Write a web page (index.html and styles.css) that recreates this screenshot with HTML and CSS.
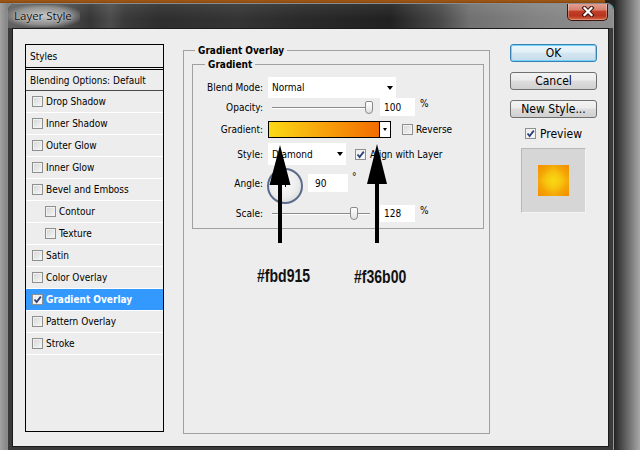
FILE: index.html
```html
<!DOCTYPE html>
<html>
<head>
<meta charset="utf-8">
<title>Layer Style</title>
<link rel="stylesheet" href="styles.css">
</head>
<body>
<div class="window">
  <div class="titlebar">
    <span class="title">Layer Style</span>
    <div class="close">
      <svg width="14" height="11" viewBox="0 0 14 11"><path d="M3.5 2 L10.5 9 M10.5 2 L3.5 9" stroke="#3a1610" stroke-width="4.2" stroke-linecap="square" fill="none"/><path d="M3.5 2 L10.5 9 M10.5 2 L3.5 9" stroke="#fff" stroke-width="2.2" stroke-linecap="square" fill="none"/></svg>
    </div>
  </div>
  <div class="content">
    <ul class="styles-list">
      <li class="head">Styles</li>
      <li class="blending">Blending Options: Default</li>
      <li class="item"><span class="cb"></span>Drop Shadow</li>
      <li class="item"><span class="cb"></span>Inner Shadow</li>
      <li class="item"><span class="cb"></span>Outer Glow</li>
      <li class="item"><span class="cb"></span>Inner Glow</li>
      <li class="item"><span class="cb"></span>Bevel and Emboss</li>
      <li class="item sub"><span class="cb"></span>Contour</li>
      <li class="item sub"><span class="cb"></span>Texture</li>
      <li class="item"><span class="cb"></span>Satin</li>
      <li class="item"><span class="cb"></span>Color Overlay</li>
      <li class="item active"><span class="cb checked"><svg width="9" height="9" viewBox="0 0 9 9"><path d="M1.5 4.5 L3.6 7 L7.8 1.6" stroke="#2b3f7a" stroke-width="1.8" fill="none"/></svg></span>Gradient Overlay</li>
      <li class="item"><span class="cb"></span>Pattern Overlay</li>
      <li class="item"><span class="cb"></span>Stroke</li>
    </ul>

    <div class="panel">
      <fieldset class="group outer">
        <legend>Gradient Overlay</legend>
        <fieldset class="group inner">
          <legend>Gradient</legend>
          <div class="row r-blend">
            <span class="lbl">Blend Mode:</span>
            <div class="select sel-blend"><span>Normal</span><i class="caret"></i></div>
          </div>
          <div class="row r-opacity">
            <span class="lbl">Opacity:</span>
            <div class="slider"><span class="thumb" style="left:93px"></span></div>
            <div class="num">100</div>
            <span class="unit">%</span>
          </div>
          <div class="row r-gradient">
            <span class="lbl">Gradient:</span>
            <div class="gradbar"><span class="gradfill"></span><span class="gradbtn"><i class="caret small"></i></span></div>
            <span class="cb"></span>
            <span class="cblabel">Reverse</span>
          </div>
          <div class="row r-style">
            <span class="lbl">Style:</span>
            <div class="select sel-style"><span>Diamond</span><i class="caret"></i></div>
            <span class="cb checked"><svg width="9" height="9" viewBox="0 0 9 9"><path d="M1.5 4.5 L3.6 7 L7.8 1.6" stroke="#2b3f7a" stroke-width="1.8" fill="none"/></svg></span>
            <span class="cblabel">Align with Layer</span>
          </div>
          <div class="row r-angle">
            <span class="lbl">Angle:</span>
            <div class="dial"></div>
            <div class="num num-angle">90</div>
            <span class="unit">°</span>
          </div>
          <div class="row r-scale">
            <span class="lbl">Scale:</span>
            <div class="slider"><span class="thumb" style="left:78px"></span></div>
            <div class="num">128</div>
            <span class="unit">%</span>
          </div>
        </fieldset>
      </fieldset>
    </div>

    <div class="actions">
      <button class="btn default">OK</button>
      <button class="btn">Cancel</button>
      <button class="btn">New Style...</button>
      <div class="preview-check"><span class="cb checked"><svg width="9" height="9" viewBox="0 0 9 9"><path d="M1.5 4.5 L3.6 7 L7.8 1.6" stroke="#2b3f7a" stroke-width="1.8" fill="none"/></svg></span><span>Preview</span></div>
      <div class="preview"><div class="swatch"></div></div>
    </div>

    <svg class="arrow a1" width="22" height="98" viewBox="0 0 22 98"><polygon points="11,0 21.5,40 13,40 13,98 9,98 9,40 0.5,40" fill="#000"/></svg>
    <svg class="arrow a2" width="22" height="99" viewBox="0 0 22 99"><polygon points="11,0 21,40 13,40 13,99 9,99 9,40 1,40" fill="#000"/></svg>
    <span class="note n1">#fbd915</span>
    <span class="note n2">#f36b00</span>
  </div>
</div>
</body>
</html>
```

FILE: styles.css
```css
* { box-sizing: border-box; }

html, body {
  margin: 0;
  width: 640px;
  height: 450px;
  overflow: hidden;
}

body {
  background:
    linear-gradient(#a05a18, #87470e) 0 0 / 605px 3px no-repeat,
    linear-gradient(90deg, #a2a2a2 0px, #858585 7px, #222 614px, #333 617px, #a8a8a8 640px);
  font-family: "DejaVu Sans Condensed", "DejaVu Sans", sans-serif;
  font-size: 10px;
  color: #000;
}

.window {
  width: 607px;
  height: 447px;
  margin: 3px 0 0 7px;
  border: 1px solid #8c8c8c;
  border-bottom: 0;
  border-right-color: #52b0cf;
  border-radius: 7px 7px 0 0;
  background: #3a3a3a;
  overflow: hidden;
}

.titlebar {
  height: 24px;
  display: flex;
  justify-content: space-between;
  align-items: flex-start;
  background:
    linear-gradient(rgba(255,255,255,0.08), rgba(255,255,255,0) 60%),
    linear-gradient(90deg, #626262 0px, #525252 52px, #363636 82px, #4c4c4c 102px, #3a3a3a 117px, #2e2e2e 152px, #343434 230px, #2a2a2a 292px, #212121 382px, #4a4a4a 432px, #717171 462px, #848484 532px, #8e8e8e 605px);
}

.title {
  margin: 1px 0 0 0;
  padding: 4px 8px 4px 6px;
  font-family: "Open Sans", "Liberation Sans", sans-serif;
  font-size: 11.5px;
  line-height: 14px;
  color: #111;
  background: radial-gradient(ellipse at 50% 50%, rgba(235,235,235,0.75) 0%, rgba(210,210,210,0.45) 55%, rgba(200,200,200,0) 80%);
  text-shadow: 0 0 2px rgba(255,255,255,0.7);
}

.close {
  width: 41px;
  height: 18px;
  margin: -1px 5px 0 0;
  border: 1px solid #3b1510;
  border-top: 0;
  border-radius: 0 0 5px 5px;
  background: linear-gradient(#e6a597 0%, #d8806d 40%, #c33e27 50%, #b8341f 75%, #d8643f 100%);
  box-shadow: inset 0 0 0 1px rgba(255,255,255,0.3);
  display: flex;
  align-items: center;
  justify-content: center;
}

.content {
  margin: 0 4px;
  height: 419px;
  border: 1px solid #1b1b1b;
  background: #ededed;
  display: flex;
  align-items: flex-start;
  padding: 15px 0 0 12px;
  position: relative;
}

/* left list */
.styles-list {
  list-style: none;
  margin: 0;
  padding: 0;
  width: 139px;
  height: 388px;
  border: 1px solid #000;
  flex: none;
}

.styles-list li {
  display: flex;
  align-items: center;
  white-space: nowrap;
}

.styles-list .head {
  height: 25px;
  border-bottom: 3px double #000;
  padding-left: 4px;
}

.styles-list .blending {
  height: 21px;
  border-bottom: 1px solid #4a4a4a;
  padding-left: 4px;
}

.styles-list .item {
  height: 22px;
  border-bottom: 1px solid #fff;
  padding-left: 6px;
}

.styles-list .item.sub { padding-left: 19px; }

.styles-list .item .cb { margin-right: 3px; }

.styles-list .item.active {
  background: #3399ff;
  color: #fff;
  font-weight: bold;
}

/* checkbox */
.cb {
  width: 11px;
  height: 11px;
  flex: none;
  border: 1px solid #8e8f8f;
  background: linear-gradient(135deg, #d4d4d4, #f8f8f8);
  box-shadow: inset 0 0 0 1px #f2f2f2;
  display: flex;
  align-items: center;
  justify-content: center;
}

.cb.checked { background: linear-gradient(135deg, #e8e8e8, #ffffff); }

/* middle panel */
.panel {
  margin-left: 19px;
  width: 307px;
  flex: none;
}

.group {
  margin: 0;
  border: 1px solid #a0a0a0;
  min-width: 0;
}

.group legend {
  font-weight: bold;
  padding: 0 3px;
  line-height: 13px;
}

.outer {
  height: 390px;
  padding: 1px 5px 0 8px;
}

.outer > legend { margin-left: 3px; }

.inner {
  padding: 6px 0 6px 8px;
}

.inner > legend { margin-left: 4px; }

.row {
  display: flex;
  align-items: center;
  white-space: nowrap;
}

.lbl {
  width: 62px;
  margin-right: 5px;
  text-align: right;
  flex: none;
}

.r-blend { height: 21px; }

.select {
  height: 100%;
  background: #fff;
  display: flex;
  align-items: center;
  justify-content: space-between;
  padding: 0 3px 0 4px;
}

.sel-blend { width: 128px; }
.sel-style { width: 78px; }

.caret {
  width: 0;
  height: 0;
  border-left: 3.5px solid transparent;
  border-right: 3.5px solid transparent;
  border-top: 4px solid #000;
}

.caret.small {
  border-left-width: 2.5px;
  border-right-width: 2.5px;
  border-top-width: 3px;
}

.r-opacity { height: 18px; }

.slider {
  position: relative;
  width: 104px;
  height: 13px;
  margin: 0 4px;
  flex: none;
}

.slider::before {
  content: "";
  position: absolute;
  left: 0;
  top: 6px;
  width: 98px;
  height: 1px;
  background: #8a8a8a;
  box-shadow: 0 1px 0 #fff;
}

.thumb {
  position: absolute;
  top: 0;
  width: 8px;
  height: 13px;
  border: 1px solid #8a8a8a;
  border-radius: 2px 2px 4px 4px;
  background: linear-gradient(#ffffff, #e2e2e2);
}

.num {
  width: 35px;
  height: 100%;
  background: #fff;
  padding-left: 4px;
  display: flex;
  align-items: center;
  flex: none;
}

.unit {
  margin-left: 5px;
  align-self: flex-start;
  line-height: 12px;
}

.r-gradient { height: 17px; margin-top: 5px; }

.gradbar {
  width: 123px;
  height: 17px;
  border: 1px solid #000;
  display: flex;
  flex: none;
}

.gradfill {
  flex: 1;
  background: linear-gradient(90deg, #fbd915, #f36b00);
}

.gradbtn {
  width: 11px;
  border-left: 1px solid #000;
  background: #fff;
  display: flex;
  align-items: center;
  justify-content: center;
}

.r-gradient .cb { margin-left: 11px; }
.cblabel { margin-left: 3px; }

.r-style { height: 22px; margin-top: 5px; }
.r-style .cb { margin-left: 9px; }
.r-style .cblabel { margin-left: 4px; }

.r-angle {
  height: 36px;
  margin-top: 3px;
  align-items: flex-start;
}

.r-angle .lbl { margin-top: 10px; }

.dial {
  width: 36px;
  height: 36px;
  margin-left: -1px;
  border-radius: 50%;
  border: 2px solid #5a6c8c;
  background: radial-gradient(circle at 45% 40%, #fbfbfb 0%, #ececec 55%, #cfcfcf 100%);
  position: relative;
  flex: none;
}

.dial::after {
  content: "";
  position: absolute;
  left: 16px;
  top: 1px;
  width: 1px;
  height: 16px;
  background: #000;
}

.num-angle {
  width: 40px;
  height: 18px;
  margin: 6px 0 0 5px;
  padding-left: 7px;
}

.r-angle .unit { margin: 3px 0 0 4px; }

.r-scale { height: 17px; margin-top: 1px; }

/* right column */
.actions {
  margin-left: 20px;
  width: 87px;
  flex: none;
  display: flex;
  flex-direction: column;
  align-items: center;
}

.btn {
  width: 87px;
  height: 18px;
  margin: 0 0 10px;
  padding: 0;
  border: 1px solid #707070;
  border-radius: 3px;
  background: linear-gradient(#f3f3f3 0%, #ebebeb 45%, #dddddd 50%, #d0d0d0 100%);
  font-family: "DejaVu Sans Condensed", "DejaVu Sans", sans-serif;
  font-size: 12px;
  line-height: 16px;
  color: #000;
}

.btn.default {
  border-color: #3c7fb1;
  box-shadow: inset 0 0 0 1px #6fd6fb;
  background: linear-gradient(#eaf5fb 0%, #e3eff6 45%, #d3e6f1 50%, #c6dceb 100%);
}

.preview-check {
  display: flex;
  align-items: center;
  height: 11px;
  font-size: 12px;
}

.preview-check .cb { margin-right: 4px; }

.preview {
  margin-top: 9px;
  width: 65px;
  height: 65px;
  background: #d6d6d6;
  border: 1px solid #b8b8b8;
  border-right-color: #f4f4f4;
  border-bottom-color: #f4f4f4;
  display: flex;
  align-items: center;
  justify-content: center;
}

.swatch {
  width: 31px;
  height: 31px;
  background:
    radial-gradient(circle at 50% 50%, rgba(250,218,20,0.9) 0%, rgba(250,210,20,0.5) 35%, rgba(250,200,20,0) 60%),
    linear-gradient(to top left, #f6c80e, #f38e00) 0 0 / 16px 16px no-repeat,
    linear-gradient(to top right, #f6c80e, #f38e00) 100% 0 / 16px 16px no-repeat,
    linear-gradient(to bottom left, #f6c80e, #f38e00) 0 100% / 16px 16px no-repeat,
    linear-gradient(to bottom right, #f6c80e, #f38e00) 100% 100% / 16px 16px no-repeat;
}

/* annotations */
.arrow {
  position: absolute;
}

.a1 { left: 256px; top: 116px; }
.a2 { left: 353px; top: 115px; }

.note {
  position: absolute;
  font-family: "Liberation Sans", "DejaVu Sans", sans-serif;
  font-weight: bold;
  font-size: 18px;
  line-height: 20px;
  color: #111;
  transform: scaleX(0.78);
  transform-origin: 0 50%;
  white-space: nowrap;
}

.n1 { left: 244px; top: 237px; }
.n2 { left: 341px; top: 238px; }
```
